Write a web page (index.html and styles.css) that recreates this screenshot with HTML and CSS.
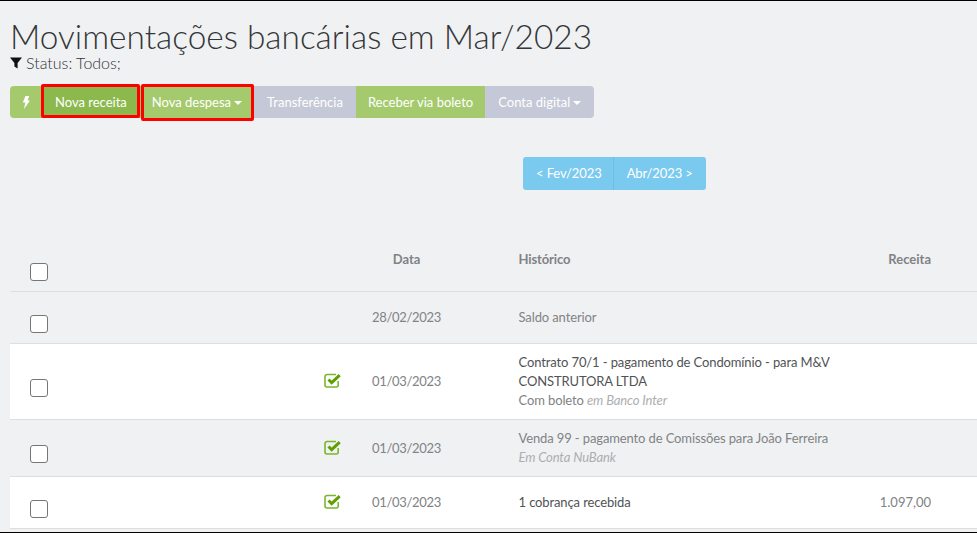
FILE: index.html
```html
<!DOCTYPE html>
<html lang="pt-BR">
<head>
    <meta charset="UTF-8">
    <meta name="viewport" content="width=device-width, initial-scale=1.0">
    <title>Movimentações bancárias</title>
    <link rel="stylesheet" href="styles.css">
</head>
<body>
    <h1 class="page-title">Movimentações bancárias em Mar/2023</h1>
    <p class="filter-line">
        <svg class="filter-icon" viewBox="0 0 12 12" width="12" height="12"><path d="M0 .5h12L7.600 6v5.500L4.400 9.600V6z"/></svg>
        Status: Todos;
    </p>

    <div class="btn-group">
        <a class="btn btn-green btn-first">
            <svg viewBox="0 0 8 13" width="8" height="13"><path d="M3.500 0h3.800L5.600 4.400H8L2 13l1.300-6.600H.8z" fill="#fff"/></svg>
        </a>
        <a class="btn btn-dark-green btn-receita">Nova receita</a>
        <a class="btn btn-green btn-despesa">Nova despesa <span class="caret"></span></a>
        <a class="btn btn-gray btn-wide">Transferência</a>
        <a class="btn btn-green">Receber via boleto</a>
        <a class="btn btn-gray btn-last">Conta digital <span class="caret"></span></a>
    </div>

    <div class="month-nav">
        <a class="btn-month">&lt; Fev/2023</a>
        <a class="btn-month">Abr/2023 &gt;</a>
    </div>

    <table class="moves">
        <colgroup>
            <col class="col-check">
            <col class="col-status">
            <col class="col-date">
            <col class="col-history">
            <col class="col-value">
        </colgroup>
        <thead>
            <tr>
                <th><input type="checkbox" class="check"></th>
                <th></th>
                <th class="date">Data</th>
                <th class="history">Histórico</th>
                <th class="value">Receita</th>
            </tr>
        </thead>
        <tbody>
            <tr class="past">
                <td><input type="checkbox" class="check"></td>
                <td></td>
                <td class="date">28/02/2023</td>
                <td class="history">Saldo anterior</td>
                <td></td>
            </tr>
            <tr class="row-white">
                <td><input type="checkbox" class="check"></td>
                <td class="status"><svg class="check-icon" viewBox="0 0 18 15" width="18" height="15"><use href="#ok"/></svg></td>
                <td class="date">01/03/2023</td>
                <td class="history">Contrato 70/1 - pagamento de Condomínio - para M&amp;V CONSTRUTORA LTDA<br><small>Com boleto <em>em Banco Inter</em></small></td>
                <td></td>
            </tr>
            <tr class="past">
                <td><input type="checkbox" class="check"></td>
                <td class="status"><svg class="check-icon" viewBox="0 0 18 15" width="18" height="15"><use href="#ok"/></svg></td>
                <td class="date">01/03/2023</td>
                <td class="history">Venda 99 - pagamento de Comissões para João Ferreira<br><small><em>Em Conta NuBank</em></small></td>
                <td></td>
            </tr>
            <tr class="row-white">
                <td><input type="checkbox" class="check"></td>
                <td class="status"><svg class="check-icon" viewBox="0 0 18 15" width="18" height="15"><use href="#ok"/></svg></td>
                <td class="date">01/03/2023</td>
                <td class="history">1 cobrança recebida</td>
                <td class="value">1.097,00</td>
            </tr>
        </tbody>
    </table>

    <svg width="0" height="0" class="defs">
        <defs>
            <g id="ok">
                <path d="M14.200 8v4A2 2 0 0 1 12.200 14H3A2 2 0 0 1 1 12V3.500A2 2 0 0 1 3 1.500h9" fill="none" stroke="#7ab52e" stroke-width="1.600"/>
                <path d="M4.500 6.500l3.200 3.200L15.700 2.200" fill="none" stroke="#5fa000" stroke-width="3"/>
            </g>
        </defs>
    </svg>
</body>
</html>
```

FILE: styles.css
```css
body {
    font-family: Lato, "Open Sans", sans-serif;
    font-size: 13px;
    background-color: #f0f1f3;
    color: #676a6c;
    margin: 0;
    border-top: 1px solid #000;
    border-bottom: 1px solid #000;
    overflow: hidden;
    height: 533px;
    box-sizing: border-box;
}

.page-title {
    font-size: 33.400px;
    font-weight: 300;
    line-height: 38px;
    color: #333638;
    margin: 16px 0 0 10px;
}

.filter-line {
    display: flex;
    align-items: center;
    gap: 4px;
    font-size: 16px;
    font-weight: 300;
    line-height: 16px;
    color: #333;
    margin: 0 0 0 10px;
}

.filter-icon {
    fill: #111;
}

.btn-group {
    display: flex;
    height: 32px;
    margin: 15px 0 0 10px;
}

.btn {
    display: flex;
    align-items: center;
    gap: 3px;
    padding: 0 12px;
    color: #fff;
    font-size: 13px;
    box-sizing: border-box;
}

.btn-wide {
    padding: 0 13px;
}

.btn-green {
    background-color: #a5ca6e;
}

.btn-dark-green {
    background-color: #8cb94e;
}

.btn-gray {
    background-color: #c5c8d6;
}

.btn-first {
    border-radius: 4px 0 0 4px;
    width: 32px;
    justify-content: center;
    padding: 0;
}

.btn-last {
    border-radius: 0 4px 4px 0;
    padding: 0 13px;
}

.btn-receita,
.btn-despesa {
    position: relative;
}

.btn-receita {
    padding: 0 13px;
}

.btn-receita::after,
.btn-despesa::after {
    content: "";
    position: absolute;
    border: 3px solid #f00;
    border-radius: 2px;
}

.btn-receita::after {
    inset: -2px 0 0 -1px;
}

.btn-despesa::after {
    inset: -2px 0 -3px 1px;
}

.caret {
    width: 0;
    height: 0;
    border-top: 4px solid #fff;
    border-left: 4px solid transparent;
    border-right: 4px solid transparent;
    margin-top: 2px;
}

.month-nav {
    display: flex;
    margin: 39px 0 0 523px;
}

.btn-month {
    display: block;
    height: 33px;
    line-height: 32px;
    padding: 0 13px;
    color: #fff;
    background-color: #7ac9ef;
    box-sizing: border-box;
    letter-spacing: -0.1px;
}

.btn-month:first-child {
    border-radius: 3px 0 0 3px;
    border-right: 1px solid #6dbde5;
    padding-right: 11px;
}

.btn-month:last-child {
    border-radius: 0 3px 3px 0;
}

.moves {
    table-layout: fixed;
    border-collapse: collapse;
    width: 967px;
    margin: 61px 0 0 10px;
}

.col-check {
    width: 300px;
}

.col-status {
    width: 42px;
}

.col-date {
    width: 109px;
}

.col-history {
    width: 399px;
}

.col-value {
    width: 117px;
}

th {
    font-weight: 700;
    font-size: 13px;
    color: #808284;
    text-align: left;
    vertical-align: top;
    height: 40px;
    padding: 0;
    border-bottom: 1px solid #dcdee0;
}

tbody tr {
    height: 52px;
}

td {
    padding: 9px 0;
    line-height: 19px;
    border-bottom: 1px solid #dcdee0;
    vertical-align: middle;
}

.date {
    text-align: center;
    letter-spacing: -0.3px;
}

th.date {
    letter-spacing: 0;
}

.history {
    padding-left: 57.500px;
    letter-spacing: -0.12px;
}

.value {
    text-align: right;
    padding-right: 46px;
}

th:first-child,
td:first-child {
    padding-left: 20px;
}

.past td {
    color: #818385;
}

.row-white {
    background-color: #fff;
}

.row-white td {
    color: #505355;
}

.row-white td.date,
.row-white td.value {
    color: #808284;
}

small {
    font-size: 13px;
    display: block;
    color: #808284;
}

em {
    color: #acaeb0;
}

.check {
    appearance: none;
    display: block;
    width: 18px;
    height: 18px;
    margin: 12px 0 0;
    border: 1px solid #767676;
    border-radius: 3px;
    background-color: #fff;
    box-sizing: border-box;
}

.status {
    padding: 0 0 2px 14px;
}

.check-icon {
    display: block;
}

.defs {
    position: absolute;
}
```
